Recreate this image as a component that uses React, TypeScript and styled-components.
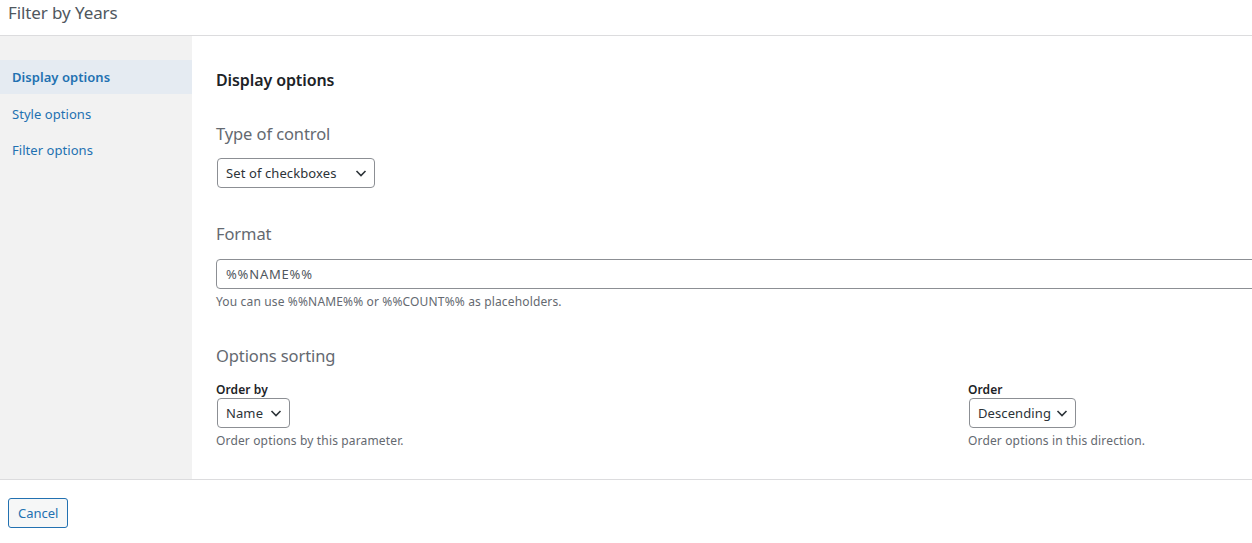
import { createGlobalStyle } from 'styled-components';
import styled from 'styled-components';

const GlobalStyle = createGlobalStyle`
  html, body {
    margin: 0;
    padding: 0;
    background: #fff;
    overflow: hidden;
  }
  body {
    font-family: "Noto Sans", "Open Sans", sans-serif;
    color: #3c434a;
  }
  * {
    box-sizing: border-box;
  }
`;

const S = {
  Modal: styled.div`
    width: 1252px;
    height: 543px;
    display: flex;
    flex-direction: column;
    overflow: hidden;
  `,

  Header: styled.div`
    height: 36px;
    padding: 0 8px;
    border-bottom: 1px solid #dcdcde;
    display: flex;
    align-items: flex-start;
  `,

  Title: styled.h1`
    margin: 1px 0 0;
    font-size: 17px;
    font-weight: 400;
    line-height: 24px;
    color: #50575e;
    letter-spacing: -0.1px;
  `,

  Body: styled.div`
    display: flex;
    height: 444px;
    border-bottom: 1px solid #dcdcde;
  `,

  Sidebar: styled.ul`
    width: 192px;
    flex-shrink: 0;
    margin: 0;
    padding: 24px 0 0;
    list-style: none;
    background: #f2f2f2;
  `,

  Tab: styled.li<{ $active?: boolean }>`
    height: ${({ $active }) => ($active ? '34px' : '36px')};
    margin-bottom: ${({ $active }) => ($active ? '2px' : '0')};
    padding: 0 12px;
    display: flex;
    align-items: center;
    font-size: 13px;
    font-weight: ${({ $active }) => ($active ? 600 : 400)};
    color: #2271b1;
    background: ${({ $active }) => ($active ? '#e5ebf2' : 'transparent')};
    letter-spacing: 0.05px;
  `,

  Panel: styled.div`
    flex: 1;
    padding: 32px 0 0 24px;
    min-width: 0;
  `,

  Form: styled.div`
    width: 1504px;
  `,

  Heading: styled.h2`
    margin: 0 0 30px;
    font-size: 16px;
    font-weight: 600;
    line-height: 24px;
    color: #1d2327;
    letter-spacing: -0.1px;
  `,

  Section: styled.div`
    margin-bottom: 34px;
  `,

  SectionTitle: styled.h3<{ $gap?: number }>`
    margin: 0 0 ${({ $gap = 12 }) => $gap}px;
    font-size: 16.5px;
    font-weight: 400;
    line-height: 24px;
    color: #646970;
    letter-spacing: -0.1px;
  `,

  Select: styled.div<{ $width: number }>`
    width: ${({ $width }) => $width}px;
    height: 30px;
    margin-left: 1px;
    padding: 0 5px 0 8px;
    border: 1px solid #8c8f94;
    border-radius: 4px;
    display: flex;
    align-items: center;
    justify-content: space-between;
    font-size: 13px;
    color: #2c3338;
    letter-spacing: 0.1px;
    background: #fff;
  `,

  Input: styled.div`
    width: 100%;
    height: 30px;
    padding: 0 9px;
    border: 1px solid #8c8f94;
    border-radius: 4px;
    display: flex;
    align-items: center;
    font-size: 13px;
    color: #50575e;
    letter-spacing: 0.8px;
  `,

  Help: styled.p`
    margin: 5px 0 0;
    font-size: 12px;
    line-height: 16px;
    color: #646970;
    letter-spacing: 0.15px;
  `,

  Columns: styled.div`
    display: grid;
    grid-template-columns: 752px 752px;
  `,

  Field: styled.div``,

  Label: styled.label`
    display: block;
    font-size: 12px;
    font-weight: 600;
    line-height: 16px;
    color: #1d2327;
    letter-spacing: 0.1px;
  `,

  Footer: styled.div`
    padding: 18px 8px 0;
  `,

  Button: styled.button`
    height: 30px;
    padding: 0 9px;
    border: 1px solid #2271b1;
    border-radius: 3px;
    background: #f6f7f7;
    color: #2271b1;
    font-family: inherit;
    font-size: 13px;
    letter-spacing: 0;
  `,
};

function Chevron() {
  return (
    <svg width="16" height="16" viewBox="0 0 16 16" fill="none">
      <path d="M3.5 6l4.5 4.5L12.5 6" stroke="#2c3338" strokeWidth="1.6" />
    </svg>
  );
}

function App() {
  return (
    <S.Modal>
      <GlobalStyle />
      <S.Header>
        <S.Title>Filter by Years</S.Title>
      </S.Header>
      <S.Body>
        <S.Sidebar>
          <S.Tab $active>Display options</S.Tab>
          <S.Tab>Style options</S.Tab>
          <S.Tab>Filter options</S.Tab>
        </S.Sidebar>
        <S.Panel>
          <S.Form>
            <S.Heading>Display options</S.Heading>

            <S.Section>
              <S.SectionTitle>Type of control</S.SectionTitle>
              <S.Select $width={158}>
                Set of checkboxes
                <Chevron />
              </S.Select>
            </S.Section>

            <S.Section>
              <S.SectionTitle $gap={13}>Format</S.SectionTitle>
              <S.Input>%%NAME%%</S.Input>
              <S.Help>You can use %%NAME%% or %%COUNT%% as placeholders.</S.Help>
            </S.Section>

            <S.Section>
              <S.SectionTitle $gap={14}>Options sorting</S.SectionTitle>
              <S.Columns>
                <S.Field>
                  <S.Label>Order by</S.Label>
                  <S.Select $width={73}>
                    Name
                    <Chevron />
                  </S.Select>
                  <S.Help>Order options by this parameter.</S.Help>
                </S.Field>
                <S.Field>
                  <S.Label>Order</S.Label>
                  <S.Select $width={107}>
                    Descending
                    <Chevron />
                  </S.Select>
                  <S.Help>Order options in this direction.</S.Help>
                </S.Field>
              </S.Columns>
            </S.Section>
          </S.Form>
        </S.Panel>
      </S.Body>
      <S.Footer>
        <S.Button>Cancel</S.Button>
      </S.Footer>
    </S.Modal>
  );
}

export default App;
